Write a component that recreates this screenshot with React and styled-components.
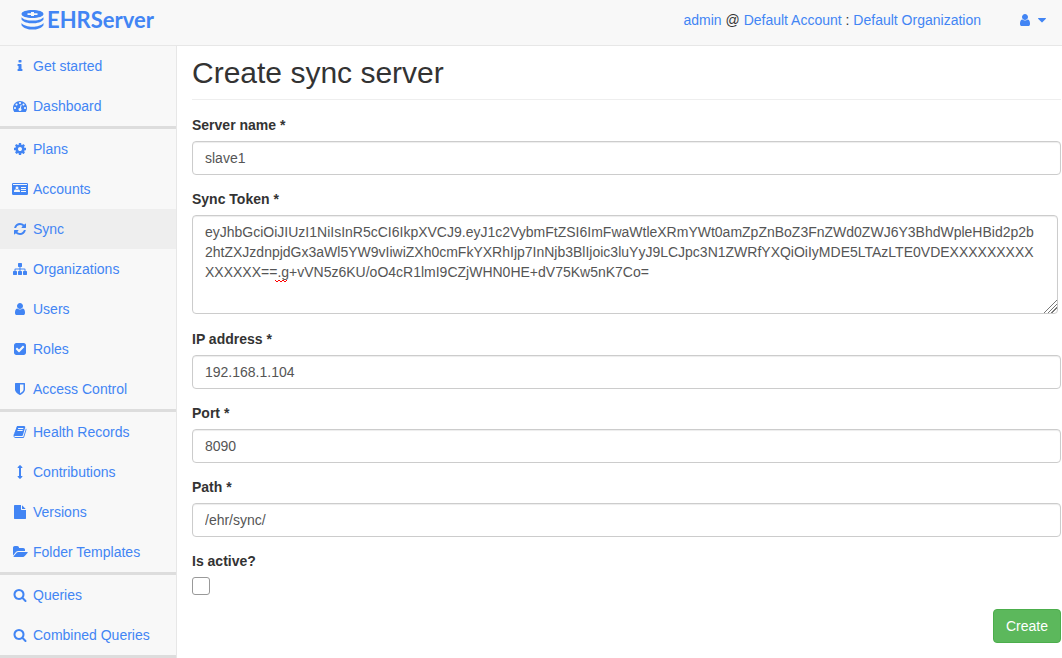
import React from "react";
import styled, { createGlobalStyle } from "styled-components";

const GlobalStyle = createGlobalStyle`
  *, *::before, *::after { box-sizing: border-box; }
  body {
    margin: 0;
    background: #f8f8f8;
    color: #333;
    font-family: "Liberation Sans", Arial, sans-serif;
    font-size: 14px;
    line-height: 20px;
  }
`;

const Page = styled.div`
  display: flex;
  flex-direction: column;
  min-height: 100vh;
`;

const TopBar = styled.header`
  display: flex;
  align-items: center;
  justify-content: space-between;
  height: 46px;
  padding: 0 13px 5px 20px;
  border-bottom: 1px solid #e7e7e7;
`;

const Brand = styled.a`
  display: flex;
  align-items: center;
  gap: 3px;
  color: #4285f4;
  font-family: Lato, sans-serif;
  font-size: 22px;
  font-weight: 700;
  line-height: 26px;
  text-decoration: none;
`;

const Link = styled.a`
  color: #4285f4;
  text-decoration: none;
`;

const Account = styled.div`
  display: flex;
  align-items: center;
  gap: 37px;
`;

const UserMenu = styled.button`
  display: flex;
  align-items: center;
  gap: 3px;
  padding: 0;
  border: 0;
  background: none;
  color: #4285f4;
`;

const Body = styled.div`
  display: flex;
  flex: 1;
`;

const Sidebar = styled.nav`
  flex: 0 0 177px;
  border-right: 1px solid #e7e7e7;
`;

const NavGroup = styled.ul`
  margin: 0;
  padding: 0;
  list-style: none;
  border-bottom: 3px solid #ddd;
`;

const NavLink = styled.a`
  display: flex;
  align-items: center;
  gap: 4px;
  padding: 10px 11px;
  color: #4285f4;
  background: ${(p) => (p.$active ? "#eee" : "transparent")};
  text-decoration: none;
  white-space: nowrap;
`;

const IconBox = styled.span`
  display: flex;
  justify-content: center;
  width: 18px;
`;

const Glyph = styled.svg`
  display: block;
  height: 14px;
  fill: currentColor;
`;

const Main = styled.main`
  flex: 1;
  min-width: 0;
  padding: 0 1px 12px 15px;
  background: #fff;
`;

const Title = styled.h1`
  margin: 0 0 15px;
  padding: 10px 0 9px;
  border-bottom: 1px solid #eee;
  font-size: 30px;
  font-weight: 400;
  line-height: 34px;
`;

const Form = styled.form`
  display: flex;
  flex-direction: column;
  gap: 14px;
`;

const Field = styled.div`
  display: flex;
  flex-direction: column;
  align-items: flex-start;
  gap: 6px;
`;

const Label = styled.label`
  font-weight: 700;
`;

const TextInput = styled.input`
  width: 100%;
  height: 34px;
  padding: 6px 12px;
  border: 1px solid #ccc;
  border-radius: 4px;
  background: #fff;
  box-shadow: inset 0 1px 1px rgba(0, 0, 0, 0.075);
  color: #555;
  font: inherit;
`;

const TokenBox = styled.div`
  position: relative;
  width: 100%;
  padding: 0 3px 1px 0;
`;

const TokenInput = styled(TextInput).attrs({ as: "textarea" })`
  display: block;
  height: 99px;
  word-break: break-all;
  resize: vertical;

  &::-webkit-resizer {
    background: linear-gradient(
      135deg,
      transparent 54%,
      #777 54% 59%, transparent 59% 67%,
      #777 67% 72%, transparent 72% 80%,
      #777 80% 85%, transparent 85%
    );
  }
`;

const SpellingMark = styled.svg`
  position: absolute;
  top: 64px;
  left: 83px;
  pointer-events: none;
`;

const Tick = styled.input`
  appearance: none;
  width: 18px;
  height: 18px;
  margin: 0;
  border: 1px solid #999;
  border-radius: 3px;
  background: #fff;
  &:checked { background: #4285f4; }
`;

const Actions = styled.div`
  display: flex;
  justify-content: flex-end;
`;

const SubmitButton = styled.button`
  height: 34px;
  padding: 6px 12px;
  border: 1px solid #4cae4c;
  border-radius: 4px;
  background: #5cb85c;
  color: #fff;
  font: inherit;
`;

const icons = {
  info: { d: "M1216 1344v128q0 26-19 45t-45 19h-512q-26 0-45-19t-19-45v-128q0-26 19-45t45-19h64v-384h-64q-26 0-45-19t-19-45v-128q0-26 19-45t45-19h384q26 0 45 19t19 45v576h64q26 0 45 19t19 45zm-128-1152v192q0 26-19 45t-45 19h-256q-26 0-45-19t-19-45v-192q0-26 19-45t45-19h256q26 0 45 19t19 45z" },
  gauge: { d: "M384 1152q0-53-37.5-90.5t-90.5-37.5-90.5 37.5-37.5 90.5 37.5 90.5 90.5 37.5 90.5-37.5 37.5-90.5zm192-448q0-53-37.5-90.5t-90.5-37.5-90.5 37.5-37.5 90.5 37.5 90.5 90.5 37.5 90.5-37.5 37.5-90.5zm428 481l101-382q6-26-7.5-48.5t-38.5-29.5-48 6.5-30 39.5l-101 382q-60 5-107 43.5t-63 98.5q-20 77 20 146t117 89 146-20 89-117q16-60-6-117t-72-91zm660-33q0-53-37.5-90.5t-90.5-37.5-90.5 37.5-37.5 90.5 37.5 90.5 90.5 37.5 90.5-37.5 37.5-90.5zm-640-640q0-53-37.5-90.5t-90.5-37.5-90.5 37.5-37.5 90.5 37.5 90.5 90.5 37.5 90.5-37.5 37.5-90.5zm448 192q0-53-37.5-90.5t-90.5-37.5-90.5 37.5-37.5 90.5 37.5 90.5 90.5 37.5 90.5-37.5 37.5-90.5zm320 448q0 261-141 483-19 29-54 29h-1402q-35 0-54-29-141-221-141-483 0-182 71-348t191-286 286-191 348-71 348 71 286 191 191 286 71 348z" },
  cog: { d: "M1152 896q0-106-75-181t-181-75-181 75-75 181 75 181 181 75 181-75 75-181zm512-109v222q0 12-8 23t-20 13l-185 28q-19 54-39 91 35 50 107 138 10 12 10 25t-9 23q-27 37-99 108t-94 71q-12 0-26-9l-138-108q-44 23-91 38-16 136-29 186-7 28-36 28h-222q-14 0-24.5-8.5t-11.5-21.5l-28-184q-49-16-90-37l-141 107q-10 9-25 9-14 0-25-11-126-114-165-168-7-10-7-23 0-12 8-23 15-21 51-66.5t54-70.5q-27-50-41-99l-183-27q-13-2-21-12.5t-8-23.5v-222q0-12 8-23t19-13l186-28q14-46 39-92-40-57-107-138-10-12-10-24 0-10 9-23 26-36 98.5-107.5t94.5-71.5q13 0 26 10l138 107q44-23 91-38 16-136 29-186 7-28 36-28h222q14 0 24.5 8.5t11.5 21.5l28 184q49 16 90 37l142-107q9-9 24-9 13 0 25 10 129 119 165 170 7 8 7 22 0 12-8 23-15 21-51 66.5t-54 70.5q26 50 41 98l183 28q13 2 21 12.5t8 23.5z" },
  card: { w: 2048, d: "M160 128h1728q160 0 160 160v1216q0 160-160 160h-1728q-160 0-160-160v-1216q0-160 160-160zM128 256v128h1792v-128zM256 1280h768v-110q0-190-170-240q-90 80-214 80t-214-80q-170 50-170 240zM640 576a190 190 0 1 0 0 380a190 190 0 1 0 0-380zM1152 640v128h640v-128zM1152 896v128h640v-128zM1152 1152v128h640v-128z" },
  refresh: { d: "M1639 1056q0 5-1 7-64 268-268 434.5t-478 166.5q-146 0-282.5-55t-243.5-157l-129 129q-19 19-45 19t-45-19-19-45v-448q0-26 19-45t45-19h448q26 0 45 19t19 45-19 45l-137 137q71 66 161 102t187 36q134 0 250-65t186-179q11-17 53-117 8-23 30-23h192q13 0 22.5 9.5t9.5 22.5zm25-800v448q0 26-19 45t-45 19h-448q-26 0-45-19t-19-45 19-45l138-138q-148-137-349-137-134 0-250 65t-186 179q-11 17-53 117-8 23-30 23h-199q-13 0-22.5-9.5t-9.5-22.5v-7q65-268 270-434.5t480-166.5q146 0 284 55.5t245 156.5l130-129q19-19 45-19t45 19 19 45z" },
  sitemap: { d: "M1792 1248v320q0 40-28 68t-68 28h-320q-40 0-68-28t-28-68v-320q0-40 28-68t68-28h96v-192h-512v192h96q40 0 68 28t28 68v320q0 40-28 68t-68 28h-320q-40 0-68-28t-28-68v-320q0-40 28-68t68-28h96v-192h-512v192h96q40 0 68 28t28 68v320q0 40-28 68t-68 28h-320q-40 0-68-28t-28-68v-320q0-40 28-68t68-28h96v-192q0-52 38-90t90-38h512v-192h-96q-40 0-68-28t-28-68v-320q0-40 28-68t68-28h320q40 0 68 28t28 68v320q0 40-28 68t-68 28h-96v192h512q52 0 90 38t38 90v192h96q40 0 68 28t28 68z" },
  user: { d: "M1536 1399q0 109-62.5 187t-150.5 78h-854q-88 0-150.5-78t-62.5-187q0-85 8.5-160.5t31.5-152 58.5-131 94-89 134.5-34.5q131 128 313 128t313-128q76 0 134.5 34.5t94 89 58.5 131 31.5 152 8.5 160.5zm-256-887q0 159-112.5 271.5t-271.5 112.5-271.5-112.5-112.5-271.5 112.5-271.5 271.5-112.5 271.5 112.5 112.5 271.5z" },
  check: { d: "M813 1299l614-614q19-19 19-45t-19-45l-102-102q-19-19-45-19t-45 19l-467 467-211-211q-19-19-45-19t-45 19l-102 102q-19 19-19 45t19 45l358 358q19 19 45 19t45-19zm851-883v960q0 119-84.5 203.5t-203.5 84.5h-960q-119 0-203.5-84.5t-84.5-203.5v-960q0-119 84.5-203.5t203.5-84.5h960q119 0 203.5 84.5t84.5 203.5z" },
  shield: { d: "M1344 960v-640h-448v1137q119-63 213-137 235-184 235-360zm192-768v768q0 86-33.5 170.5t-83 150-118 127.5-126.5 103-121 77.5-89.5 49.5-42.5 20q-12 6-26 6t-26-6q-16-7-42.5-20t-89.5-49.5-121-77.5-126.5-103-118-127.5-83-150-33.5-170.5v-768q0-26 19-45t45-19h1152q26 0 45 19t19 45z" },
  book: { d: "M1703 478q40 57 18 129l-275 906q-19 64-76.5 107.5t-122.5 43.5h-923q-77 0-148.5-53.5t-99.5-131.5q-24-67-2-127 0-4 3-27t4-37q1-8-3-21.5t-3-19.5q2-11 8-21t16.5-23.5 16.5-23.5q23-38 45-91.5t30-91.5q3-10 .5-30t-.5-28q3-11 17-28t17-23q21-36 42-92t25-90q1-9-2.5-32t.5-28q4-13 22-30.5t22-22.5q19-26 42.5-84.5t27.5-96.5q1-8-3-25.5t-2-26.5q2-8 9-18t18-23 17-21q8-12 16.5-30.5t15-35 16-36 19.5-32 26.5-23.5 36-11.5 47.5 5.5l-1 3q38-9 51-9h761q74 0 114 56t18 130l-274 906q-36 119-71.5 153.5t-128.5 34.5h-869q-27 0-38 15-11 16-1 43 24 70 144 70h923q29 0 56-15.5t35-41.5l300-987q7-22 5-57 38 15 59 43zm-1064 2q-4 13 2 22.5t20 9.5h608q13 0 25.5-9.5t16.5-22.5l21-64q4-13-2-22.5t-20-9.5h-608q-13 0-25.5 9.5t-16.5 22.5zm-83 256q-4 13 2 22.5t20 9.5h608q13 0 25.5-9.5t16.5-22.5l21-64q4-13-2-22.5t-20-9.5h-608q-13 0-25.5 9.5t-16.5 22.5z" },
  arrows: { d: "M1216 320q0 26-19 45t-45 19h-128v1024h128q26 0 45 19t19 45-19 45l-256 256q-19 19-45 19t-45-19l-256-256q-19-19-19-45t19-45 45-19h128v-1024h-128q-26 0-45-19t-19-45 19-45l256-256q19-19 45-19t45 19l256 256q19 19 19 45z" },
  file: { d: "M1152 512v-472q22 14 36 28l408 408q14 14 28 36h-472zm-128 32q0 40 28 68t68 28h544v1056q0 40-28 68t-68 28h-1344q-40 0-68-28t-28-68v-1600q0-40 28-68t68-28h800v544z" },
  folder: { w: 1920, d: "M1879 952q0 31-31 66l-336 396q-43 51-120.5 86.5t-143.5 35.5h-1088q-34 0-60.5-13t-26.5-43q0-31 31-66l336-396q43-51 120.5-86.5t143.5-35.5h1088q34 0 60.5 13t26.5 43zm-343-344v160h-832q-94 0-197 47.5t-164 119.5l-337 396-5 6q0-4-.5-12.5t-.5-12.5v-960q0-92 66-158t158-66h320q92 0 158 66t66 158v32h544q92 0 158 66t66 158z" },
  search: { d: "M1216 832q0-185-131.5-316.5t-316.5-131.5-316.5 131.5-131.5 316.5 131.5 316.5 316.5 131.5 316.5-131.5 131.5-316.5zm512 832q0 52-38 90t-90 38q-54 0-90-38l-343-342q-179 124-399 124-143 0-273.5-55.5t-225-150-150-225-55.5-273.5 55.5-273.5 150-225 225-150 273.5-55.5 273.5 55.5 225 150 150 225 55.5 273.5q0 220-124 399l343 343q37 37 37 90z" },
  caret: { d: "M1408 704q0 26-19 45l-448 448q-19 19-45 19t-45-19l-448-448q-19-19-19-45t19-45 45-19h896q26 0 45 19t19 45z" },
};

function Icon({ name }) {
  const { d, w = 1792 } = icons[name];
  return (
    <Glyph viewBox={`0 0 ${w} 1792`} width={w / 128} aria-hidden="true">
      <path d={d} fillRule="evenodd" />
    </Glyph>
  );
}

function Logo() {
  return (
    <svg width="24" height="22" viewBox="0 0 24 22" fill="#4285f4" aria-hidden="true">
      <path fillRule="evenodd" d="M12.500 1C18.600 1 23.500 2.600 23.500 5S18.600 9 12.500 9S1.500 7.400 1.500 5S6.400 1 12.500 1ZM11 3V4.200H7.500V5.900H11V7H14V5.900H17.500V4.200H14V3Z" />
      <path d="M1.500 8.200C3.500 10.600 8 11.600 12.500 11.600S21.500 10.600 23.500 8.200V10.400C21.500 13 17 14.300 12.500 14.300S3.500 13 1.500 10.400Z" />
      <path d="M1.500 14C3.500 16.600 8 17.800 12.500 17.800S21.500 16.600 23.500 14V16.200C21.500 19.200 17 20.600 12.500 20.600S3.500 19.200 1.500 16.200Z" />
    </svg>
  );
}

const groups = [
  [["info", "Get started"], ["gauge", "Dashboard"]],
  [["cog", "Plans"], ["card", "Accounts"], ["refresh", "Sync"], ["sitemap", "Organizations"], ["user", "Users"], ["check", "Roles"], ["shield", "Access Control"]],
  [["book", "Health Records"], ["arrows", "Contributions"], ["file", "Versions"], ["folder", "Folder Templates"]],
  [["search", "Queries"], ["search", "Combined Queries"]],
];

const token = [
  "eyJhbGciOiJIUzI1NiIsInR5cCI6IkpXVCJ9.eyJ1c2VybmFtZSI6ImFwaWtleXRmYWt0amZpZnBoZ3FnZWd0ZWJ6Y3BhdWpleHBid2p2b",
  "2htZXJzdnpjdGx3aWl5YW9vIiwiZXh0cmFkYXRhIjp7InNjb3BlIjoic3luYyJ9LCJpc3N1ZWRfYXQiOiIyMDE5LTAzLTE0VDEXXXXXXXXX",
  "XXXXXX==.g+vVN5z6KU/oO4cR1lmI9CZjWHN0HE+dV75Kw5nK7Co=",
].join("\n");

function TextField({ id, label, value }) {
  return (
    <Field>
      <Label htmlFor={id}>{label}</Label>
      <TextInput id={id} type="text" defaultValue={value} />
    </Field>
  );
}

export default function App() {
  return (
    <Page>
      <GlobalStyle />
      <TopBar>
        <Brand href="#"><Logo />EHRServer</Brand>
        <Account>
          <span>
            <Link href="#">admin</Link> @ <Link href="#">Default Account</Link> : <Link href="#">Default Organization</Link>
          </span>
          <UserMenu type="button" aria-label="User menu"><Icon name="user" /><Icon name="caret" /></UserMenu>
        </Account>
      </TopBar>
      <Body>
        <Sidebar>
          {groups.map((items, i) => (
            <NavGroup key={i}>
              {items.map(([icon, text]) => (
                <li key={text}>
                  <NavLink href="#" $active={text === "Sync"}>
                    <IconBox><Icon name={icon} /></IconBox>
                    {text}
                  </NavLink>
                </li>
              ))}
            </NavGroup>
          ))}
        </Sidebar>
        <Main>
          <Title>Create sync server</Title>
          <Form onSubmit={(e) => e.preventDefault()}>
            <TextField id="name" label="Server name *" value="slave1" />
            <Field>
              <Label htmlFor="token">Sync Token *</Label>
              <TokenBox>
                <TokenInput id="token" spellCheck={false} defaultValue={token} />
                <SpellingMark width="12" height="4" viewBox="0 0 12 4" aria-hidden="true">
                  <path d="M0 1L2 3L4 1L6 3L8 1L10 3L12 1" fill="none" stroke="#f00" />
                </SpellingMark>
              </TokenBox>
            </Field>
            <TextField id="ip" label="IP address *" value="192.168.1.104" />
            <TextField id="port" label="Port *" value="8090" />
            <TextField id="path" label="Path *" value="/ehr/sync/" />
            <Field>
              <Label htmlFor="active">Is active?</Label>
              <Tick id="active" type="checkbox" />
            </Field>
            <Actions><SubmitButton type="submit">Create</SubmitButton></Actions>
          </Form>
        </Main>
      </Body>
    </Page>
  );
}
